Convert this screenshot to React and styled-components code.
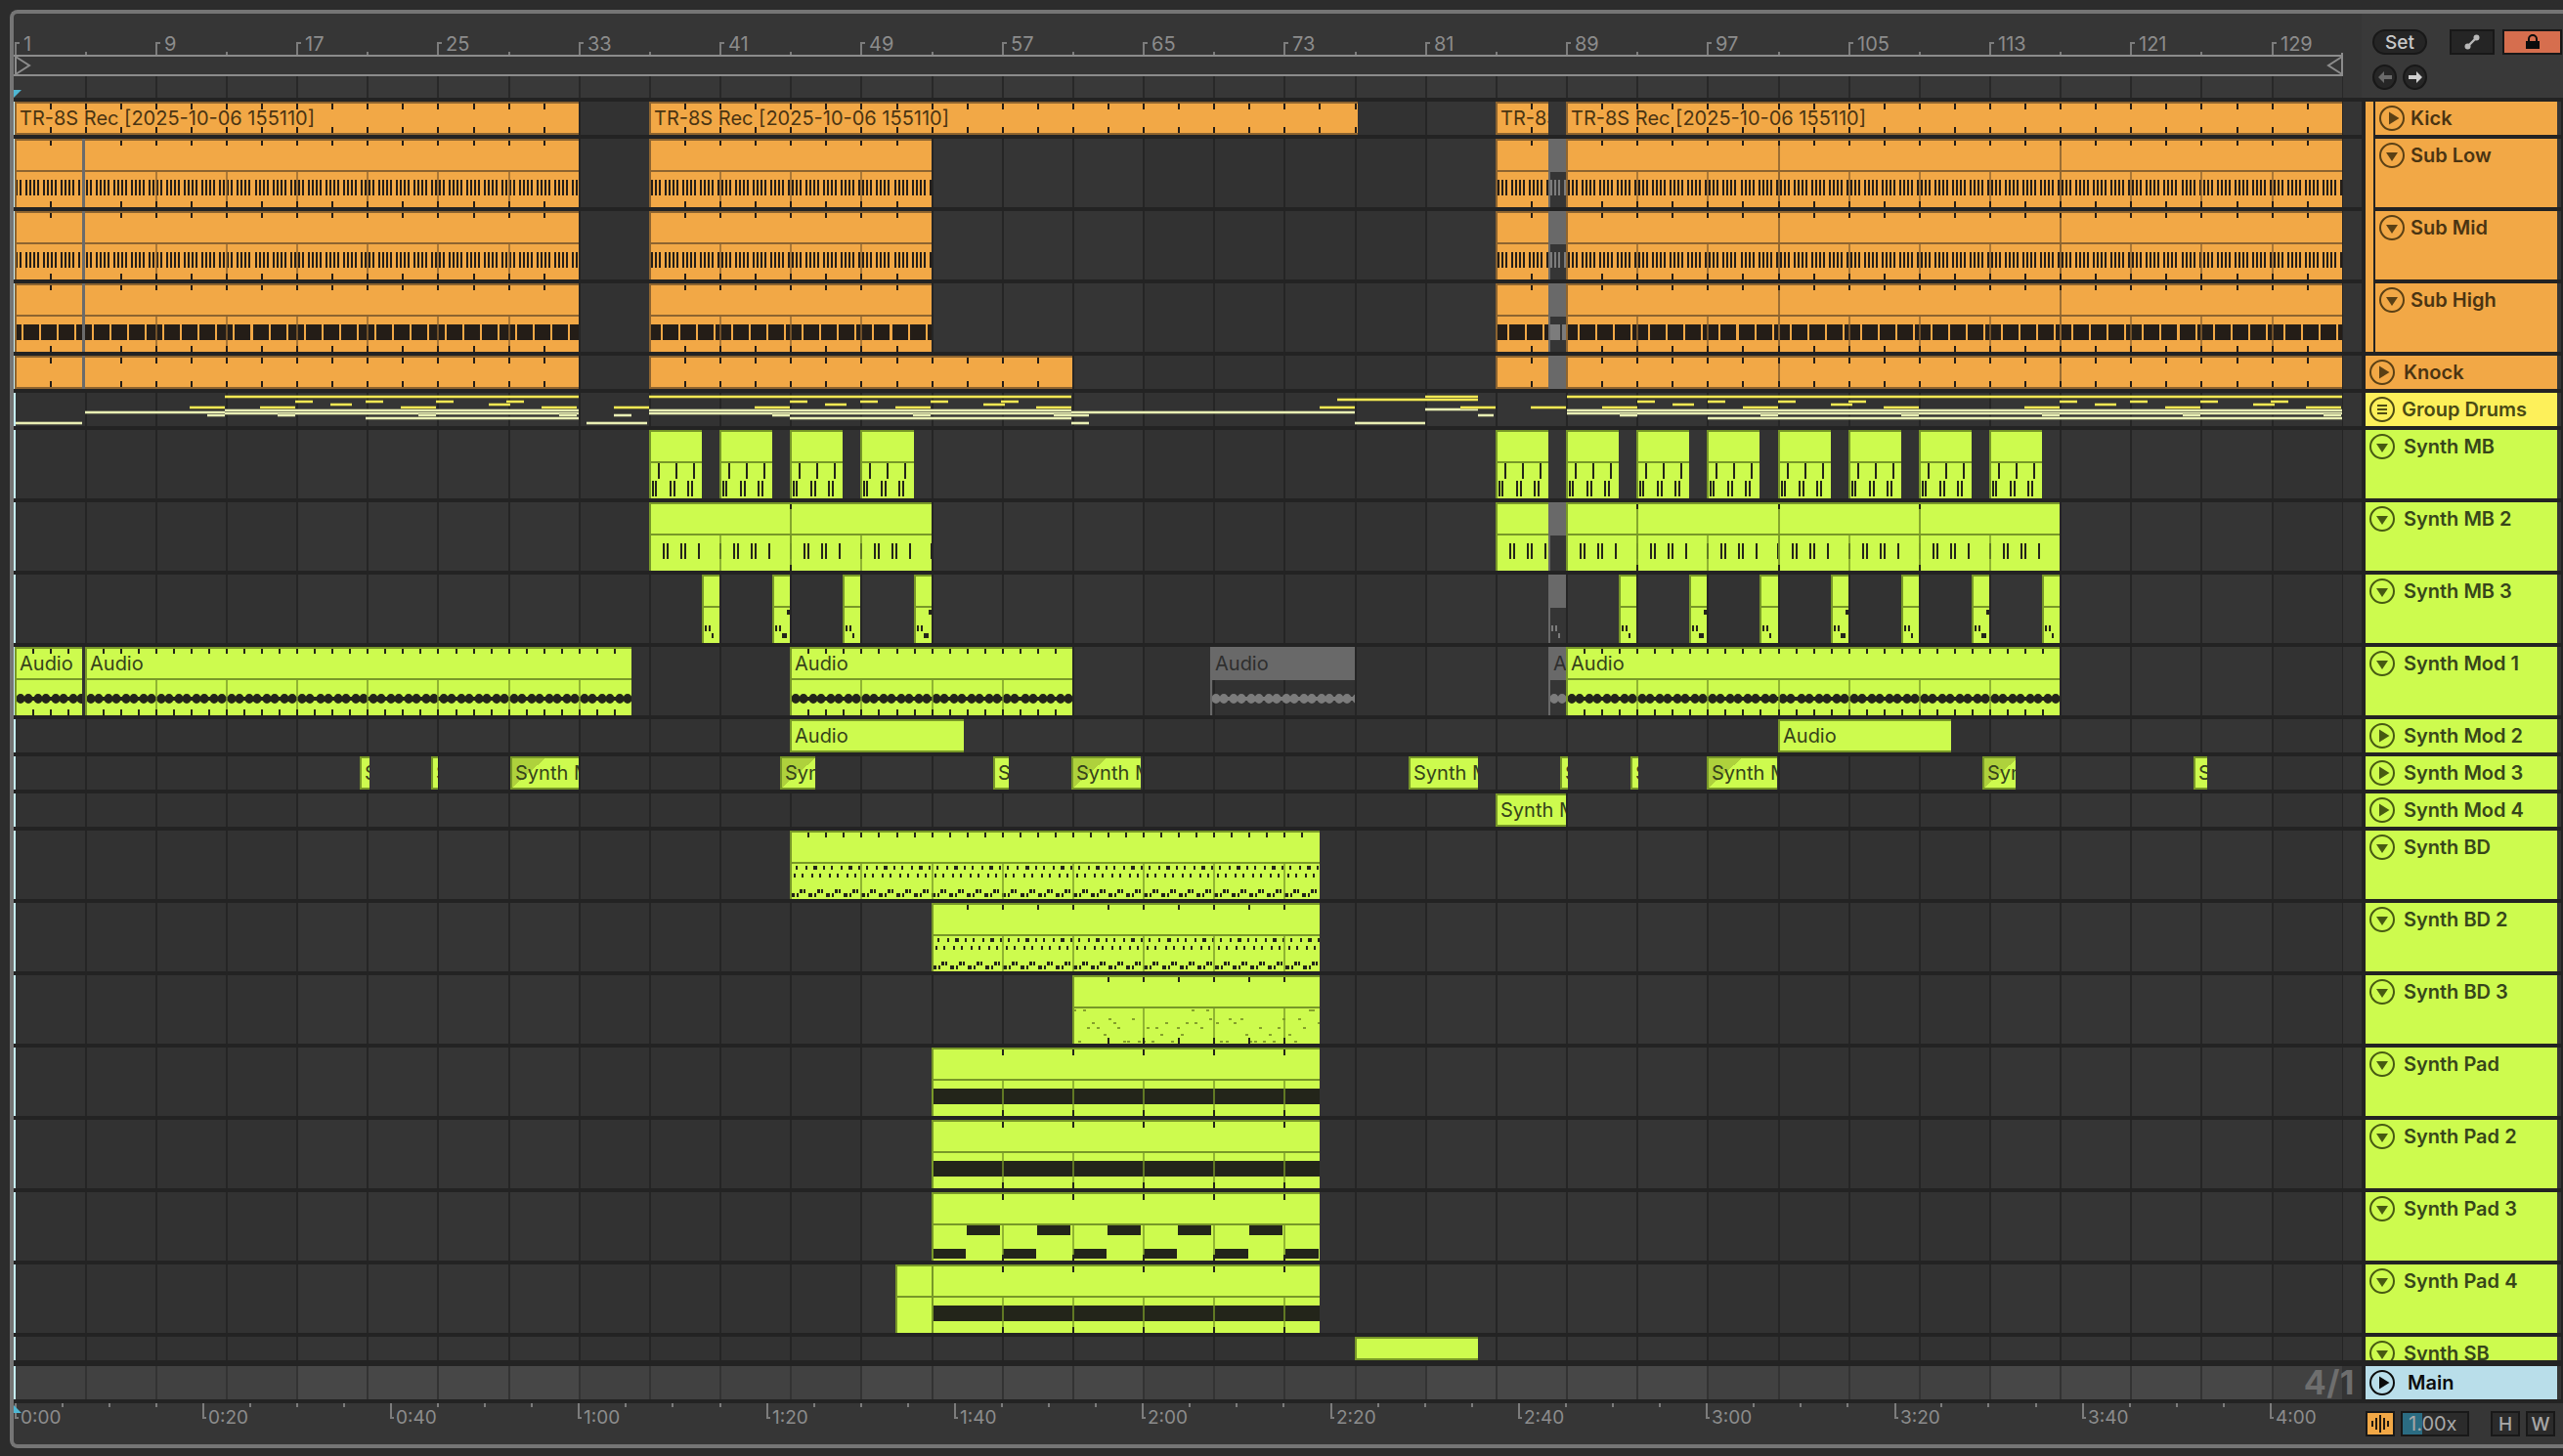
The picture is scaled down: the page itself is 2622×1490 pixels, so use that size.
import React from "react";
import styled, { createGlobalStyle } from "styled-components";

//timeline maths
const BAR = 18.04;
const barX = (n) => 15.5 + (n - 1) * BAR;
const gx = (n) => Math.round(barX(n));
const b = (n) => gx(n) - 1;
const LANE_LEFT = 14;
const LANE_WIDTH = 2383;
const rect = (x, y, w, h) => `M${x} ${y}h${w}v${h}h${-w}z`;

//colours for a clip
const ORANGE = { head: "#f2a846", body: "#f2a846", edge: "#8d6430", ink: "#241d17", text: "#4a3412" };
const LIME = { head: "#cdfb4e", body: "#cdfb4e", edge: "#789828", ink: "#23251a", text: "#35421a" };
const GRAY = { head: "#696969", body: "transparent", edge: "#696969", ink: "#7c7c7c", text: "#2e2e2e", plain: true };

const gridBackground = (base, alt, line) => {
  const stops = [];
  let pos = 0;
  for (let n = 5; n <= 133; n += 4) {
    const x = gx(n) - LANE_LEFT;
    const fill = (n - 5) % 32 < 16 ? base : alt;
    stops.push(`${fill} ${pos}px`, `${fill} ${x - 1}px`, `${line} ${x - 1}px`, `${line} ${x + 1}px`);
    pos = x + 1;
  }
  stops.push(`${base} ${pos}px`);
  return `linear-gradient(90deg, ${stops.join(",")})`;
};
const LANE_BG = gridBackground("#323232", "#353535", "#252525");
const MAIN_BG = gridBackground("#414141", "#474747", "#333333");
const STRIP_BG = gridBackground("#373737", "#393939", "#282828");

//drawing helpers, everything in page x
const ticks = (x0, x1, t, start, step, spans) => {
  if (t.plain) return [];
  let d = "";
  for (let n = start; barX(n) < x1 - 1; n += step) {
    if (barX(n) <= x0 + 2) continue;
    const x = gx(n) - 1;
    spans.forEach(([y, h]) => (d += rect(x, y, 2, h)));
  }
  return [{ d, fill: t.ink }];
};
const bodyLines = (x0, x1, t, y = 34, h = 36) => {
  if (t.plain) return [];
  let d = "";
  for (let n = 1; barX(n) < x1 - 1; n += 4) {
    if (barX(n) <= x0 + 2) continue;
    d += rect(gx(n) - 1, y, 2, h);
  }
  return [{ d, fill: t.edge, opacity: 0.72 }];
};
const loopLines = (x1, bars, t) => [
  { d: bars.filter((n) => barX(n) < x1).map((n) => rect(gx(n) - 1, 0, 2, 70)).join(""), fill: t.edge, opacity: 0.85 },
];
const repeat = (x0, x1, anchor, period, fn) => {
  let d = "";
  let k = Math.floor((x0 - anchor) / period) - 1;
  for (; anchor + k * period < x1; k++) d += fn(Math.round(anchor + k * period), k);
  return d;
};

const subLowArt = (anchor, loops = []) => (x0, x1, t) => [
  { d: repeat(x0, x1, anchor, BAR, (x) => rect(x, 42, 2, 16) + rect(x + 4, 42, 2, 16) + rect(x + 8, 42, 2, 16) + rect(x + 12, 42, 2, 16)), fill: t.ink },
  ...bodyLines(x0, x1, t),
  ...loopLines(x1, loops, t),
  ...ticks(x0, x1, t, 3, 2, [[2, 5], [64, 6]]),
];
const subHighArt = (anchor, loops = []) => (x0, x1, t) => [
  { d: repeat(x0, x1, anchor, BAR, (x) => rect(x, 42, 16, 16)), fill: t.ink },
  ...bodyLines(x0, x1, t),
  ...loopLines(x1, loops, t),
  ...ticks(x0, x1, t, 3, 2, [[2, 5], [64, 6]]),
];
const knockArt = (loops = []) => (x0, x1, t) => [
  ...loopLines(x1, loops, t),
  ...ticks(x0, x1, t, 3, 2, [[2, 6], [26, 6]]),
];
const mbArt = (x0, x1, t) => [
  { d: [9, 27, 45].map((o) => rect(x0 + o, 34, 2, 16)).join(""), fill: t.ink },
  { d: [3, 6, 21, 25, 39, 43].map((o) => rect(x0 + o, 52, 2, 16)).join(""), fill: t.ink },
];
const mb2Art = (anchor, loops) => (x0, x1, t) => [
  { d: repeat(x0, x1, anchor, BAR * 4, (x) => rect(x + 14, 42, 2, 16) + rect(x + 18, 42, 2, 16) + rect(x + 32, 42, 2, 16) + rect(x + 36, 42, 2, 16) + rect(x + 50, 42, 2, 16) + rect(x + 72, 42, 2, 16)), fill: t.ink },
  ...bodyLines(x0, x1, t),
  ...loopLines(x1, loops, t),
  ...ticks(x0, x1, t, 5, 8, [[2, 5], [64, 6]]),
];
const mb3Art = (alt) => (x0, x1, t) => [
  {
    d:
      rect(x0 + 3, 52, 2, 6) + rect(x0 + 7, 52, 2, 6) + rect(x0 + 10, 60, 2, 5) +
      (alt ? rect(x0 + 15, 36, 3, 5) + rect(x0 + 12, 60, 3, 5) : ""),
    fill: t.ink,
  },
];
const waveArt = (x0, x1, t) => [
  {
    d: repeat(x0 + 2, x1, x0 + 2, BAR, (x) =>
      `M${x + 4} 48a4.5 5 0 0 1 0 10a4.5 5 0 0 1 0 -10z` +
      `M${x + 12} 48a4.5 5 0 0 1 0 10a4.5 5 0 0 1 0 -10z` +
      rect(x + 14, 51, 5, 4)
    ),
    fill: t.ink,
  },
  ...bodyLines(x0, x1, t),
  ...ticks(x0, x1, t, 2, 1, [[2, 5], [64, 6]]),
];
const dotsArt = (start, step) => (x0, x1, t) => [
  {
    d: repeat(x0, x1, x0, BAR, (x, k) =>
      rect(x + 6, 36, k % 2 ? 4 : 2, 4) + rect(x + 16, 36, 2, 4) +
      rect(x + 4, 44, 2, 4) + rect(x + 12, 44, 2, 4) +
      rect(x + 10, 60, 3, 4) + rect(x + 14, 60, 2, 4) +
      rect(x + 1, 64, 4, 4) + rect(x + 7, 64, 2, 4)
    ),
    fill: t.ink,
  },
  ...bodyLines(x0, x1, t),
  ...ticks(x0, x1, t, start, step, [[2, 5]]),
];
//scattered quiet notes, a fixed scramble so the picture never changes
const scramble = (k) => {
  const s = Math.sin(k * 12.9898) * 43758.5453;
  return s - Math.floor(s);
};
const FAINT_ROWS = [35, 44, 48, 53, 60, 67, 67];
const faintArt = (x0, x1, t) => [
  {
    d: repeat(x0, x1, x0, 5, (x, k) => {
      if (k < 0) return "";
      const y = FAINT_ROWS[Math.floor(scramble(k) * FAINT_ROWS.length)];
      return rect(x + Math.floor(scramble(k + 500) * 3), y, 3, 2);
    }),
    fill: "#84a02c",
  },
  ...bodyLines(x0, x1, t),
  ...ticks(x0, x1, t, 63, 2, [[2, 5], [64, 6]]),
];
const padArt = (x0, x1, t) => [
  { d: rect(x0, 42, x1 - x0, 16), fill: t.ink },
  ...bodyLines(x0, x1, t),
  ...ticks(x0, x1, t, 1, 4, [[2, 6], [64, 6]]),
];
const padStepArt = (x0, x1, t) => [
  { d: repeat(x0, x1, b(53), BAR * 4, (x) => rect(x + 36, 34, 34, 10) + rect(x + 1, 58, 34, 10)), fill: t.ink },
  ...bodyLines(x0, x1, t),
  ...ticks(x0, x1, t, 1, 4, [[2, 6], [64, 6]]),
];

const TR = "TR-8S Rec [2025-10-06 155110]";
const subClips = (art) => [
  { x0: b(1), x1: 84, t: ORANGE, art: art(26) },
  { x0: 84, x1: 87, t: GRAY, solid: true },
  { x0: 87, x1: b(33), t: ORANGE, art: art(26), bare: true },
  { x0: b(37), x1: b(53), t: ORANGE, art: art(680) },
  { x0: b(85), x1: b(88), t: ORANGE, art: art(1546) },
  { x0: b(88), x1: b(89), t: GRAY, art: art(1546) },
  { x0: b(89), x1: b(133), t: ORANGE, art: art(1546, [101, 117]) },
];
const subLow = (anchor, loops) => subLowArt(anchor, loops);
const subHigh = (anchor, loops) => subHighArt(anchor - 2, loops);
const mbClips = (bars, art) => bars.map((n) => ({ x0: b(n), x1: b(n + 3), t: LIME, art }));
const mb3Clips = (bars) => bars.map((n, i) => ({ x0: b(n), x1: b(n + 1), t: LIME, art: mb3Art(i % 2 === 1) }));
const MOD3 = [
  [368, 378], [441, 448], [522, 592, true], [798, 834, true], [1016, 1032], [1096, 1167, true],
  [1441, 1512], [1596, 1604], [1668, 1676], [1746, 1818, true], [2028, 2062, true], [2244, 2258],
];
const CLIP_END = gx(75);

const TRACKS = [
  { name: "Kick", icon: "play", color: "orange", h: 34, nested: true, clips: [
    { x0: b(1), x1: b(33), t: ORANGE, title: TR, art: knockArt() },
    { x0: b(37), x1: 1389, t: ORANGE, title: TR, art: knockArt() },
    { x0: b(85), x1: b(88), t: ORANGE, title: TR, art: knockArt() },
    { x0: b(89), x1: b(133), t: ORANGE, title: TR, art: knockArt() },
  ] },
  { name: "Sub Low", icon: "down", color: "orange", h: 70, nested: true, clips: subClips(subLow) },
  { name: "Sub Mid", icon: "down", color: "orange", h: 70, nested: true, clips: subClips(subLow) },
  { name: "Sub High", icon: "down", color: "orange", h: 70, nested: true, clips: subClips(subHigh) },
  { name: "Knock", icon: "play", color: "orange", h: 34, clips: [
    { x0: b(1), x1: 84, t: ORANGE, art: knockArt() },
    { x0: 84, x1: 87, t: GRAY, solid: true },
    { x0: 87, x1: b(33), t: ORANGE, art: knockArt(), bare: true },
    { x0: b(37), x1: b(61), t: ORANGE, art: knockArt() },
    { x0: b(85), x1: b(88), t: ORANGE, art: knockArt() },
    { x0: b(88), x1: b(89), t: GRAY },
    { x0: b(89), x1: b(133), t: ORANGE, art: knockArt([101, 117]) },
  ] },
  { name: "Group Drums", icon: "group", color: "yellow", h: 34, overview: true, clips: [] },
  { name: "Synth MB", icon: "down", color: "lime", h: 70, clips: mbClips([37, 41, 45, 49, 85, 89, 93, 97, 101, 105, 109, 113], mbArt) },
  { name: "Synth MB 2", icon: "down", color: "lime", h: 70, clips: [
    { x0: b(37), x1: b(53), t: LIME, art: mb2Art(b(37), [45]) },
    { x0: b(85), x1: b(88), t: LIME, art: mb2Art(b(85), []) },
    { x0: b(88), x1: b(89), t: GRAY },
    { x0: b(89), x1: b(117), t: LIME, art: mb2Art(b(85), [93, 101, 109]) },
  ] },
  { name: "Synth MB 3", icon: "down", color: "lime", h: 70, clips: [
    ...mb3Clips([40, 44, 48, 52, 92, 96, 100, 104, 108, 112, 116]),
    { x0: b(88), x1: b(89), t: GRAY, art: mb3Art(false) },
  ] },
  { name: "Synth Mod 1", icon: "down", color: "lime", h: 70, clips: [
    { x0: b(1), x1: 84, t: LIME, title: "Audio", art: waveArt },
    { x0: 87, x1: 646, t: LIME, title: "Audio", art: waveArt },
    { x0: b(45), x1: b(61), t: LIME, title: "Audio", art: waveArt },
    { x0: 1238, x1: b(77), t: GRAY, title: "Audio", art: waveArt },
    { x0: b(88), x1: b(89), t: GRAY, title: "Audio", art: waveArt },
    { x0: b(89), x1: b(117), t: LIME, title: "Audio", art: waveArt },
  ] },
  { name: "Synth Mod 2", icon: "play", color: "lime", h: 34, clips: [
    { x0: b(45), x1: 986, t: LIME, title: "Audio" },
    { x0: 1819, x1: 1996, t: LIME, title: "Audio" },
  ] },
  { name: "Synth Mod 3", icon: "play", color: "lime", h: 34, clips: MOD3.map(([x0, x1, fade]) => ({ x0, x1, t: LIME, title: "Synth Mod 3", fade })) },
  { name: "Synth Mod 4", icon: "play", color: "lime", h: 34, clips: [{ x0: b(85), x1: b(89), t: LIME, title: "Synth Mod 4" }] },
  { name: "Synth BD", icon: "down", color: "lime", h: 70, clips: [{ x0: b(45), x1: CLIP_END, t: LIME, art: dotsArt(46, 1) }] },
  { name: "Synth BD 2", icon: "down", color: "lime", h: 70, clips: [{ x0: b(53), x1: CLIP_END, t: LIME, art: dotsArt(55, 2) }] },
  { name: "Synth BD 3", icon: "down", color: "lime", h: 70, clips: [{ x0: b(61), x1: CLIP_END, t: LIME, art: faintArt }] },
  { name: "Synth Pad", icon: "down", color: "lime", h: 70, clips: [{ x0: b(53), x1: CLIP_END, t: LIME, art: padArt }] },
  { name: "Synth Pad 2", icon: "down", color: "lime", h: 70, clips: [{ x0: b(53), x1: CLIP_END, t: LIME, art: padArt }] },
  { name: "Synth Pad 3", icon: "down", color: "lime", h: 70, clips: [{ x0: b(53), x1: CLIP_END, t: LIME, art: padStepArt }] },
  { name: "Synth Pad 4", icon: "down", color: "lime", h: 70, clips: [
    { x0: 916, x1: b(53), t: LIME },
    { x0: b(53), x1: CLIP_END, t: LIME, art: padArt },
  ] },
  { name: "Synth SB", icon: "down", color: "lime", h: 24, short: true, clips: [{ x0: 1386, x1: 1512, t: LIME, stub: true }] },
];

//group track overview lines
const PHRASE = [
  ["y", 410, 144, 162], ["y", 410, 216, 234], ["y", 410, 288, 306], ["y", 410, 360, 378],
  ["y", 413, 180, 202], ["y", 413, 342, 364],
  ["y", 416, 108, 144], ["y", 416, 252, 288], ["y", 416, 396, 432],
  ["p", 424, 126, 144], ["p", 424, 270, 288], ["p", 424, 414, 432],
];
const phrase = (origin, from, to) => {
  const out = [["y", 405, from, to], ["p", 419, from, to], ["p", 422, from, to], ["p", 427, Math.min(from + 144, to), to]];
  for (let k = 0; origin + k * 432 < to; k++) {
    PHRASE.forEach(([c, y, a, z]) => {
      const s = Math.max(origin + k * 432 + a, from);
      const e = Math.min(origin + k * 432 + z, to);
      if (e > s) out.push([c, y, s, e]);
    });
  }
  return out;
};
const OVERVIEW = [
  ["p", 432, 16, 84], ["p", 421, 87, 230], ["y", 416, 194, 230], ["p", 424, 212, 230],
  ...phrase(158, 230, 592),
  ["p", 432, 600, 662], ["y", 416, 628, 664], ["p", 424, 628, 646],
  ...phrase(664, 664, 1096),
  ["p", 421, 1096, 1386], ["p", 424, 1096, 1114], ["p", 432, 1096, 1114],
  ["y", 416, 1350, 1386], ["y", 408, 1368, 1512], ["y", 405, 1458, 1512],
  ["p", 432, 1386, 1458], ["p", 418, 1458, 1512], ["y", 416, 1494, 1530], ["p", 424, 1512, 1528],
  ["y", 416, 1566, 1602],
  ...phrase(1531, 1603, 2396),
];

const GlobalStyle = createGlobalStyle`
  html, body {
    margin: 0;
    padding: 0;
    background: #2c2c2c;
  }
  body {
    width: 2622px;
    height: 1490px;
    overflow: hidden;
    font-family: Inter, "Liberation Sans", sans-serif;
  }
`;

const Window = styled.div`
  box-sizing: border-box;
  position: relative;
  width: 2612px;
  height: 1472px;
  margin: 10px 0 0 10px;
  border: 4px solid #757575;
  border-right: none;
  border-radius: 8px 0 0 8px;
  background: #363636;
  display: flex;
  flex-direction: column;
`;

const TopArea = styled.div`
  display: flex;
  height: 86px;
`;

const RulerColumn = styled.div`
  width: ${LANE_WIDTH}px;
  display: flex;
  flex-direction: column;
`;

const BarScale = styled.div`
  position: relative;
  height: 42px;
`;

const RulerArt = styled.svg`
  position: absolute;
  left: 0;
  top: 0;
  overflow: visible;
`;

const ScaleLabel = styled.span.attrs((p) => ({ style: { left: p.$x } }))`
  position: absolute;
  top: ${(p) => p.$top}px;
  font-size: ${(p) => p.$size}px;
  line-height: 22px;
  color: #8c8c8c;
`;

const LoopBar = styled.div`
  height: 22px;
`;

const GridStrip = styled.div`
  position: relative;
  height: 22px;
  background: ${STRIP_BG};
`;

const Marker = styled.svg`
  position: absolute;
  left: 0;
  bottom: 0;
`;

const TopControls = styled.div`
  flex: 1;
  margin-left: 19px;
  padding: 16px 0 0 11px;
  background: #393939;
  display: grid;
  grid-template-columns: 56px 46px 46px;
  grid-template-rows: 26px 26px;
  column-gap: 23px;
  row-gap: 10px;
  grid-template-areas: "set expand lock" "nav . .";
`;

const SetButton = styled.div`
  box-sizing: border-box;
  grid-area: set;
  background: #252525;
  border: 2px solid #181818;
  border-radius: 13px;
  color: #c8c8c8;
  font-size: 19px;
  font-weight: 500;
  display: flex;
  align-items: center;
  justify-content: center;
`;

const SquareButton = styled.div`
  box-sizing: border-box;
  grid-area: ${(p) => p.$area};
  margin-left: ${(p) => p.$shift || 0}px;
  background: ${(p) => p.$bg};
  border: 2px solid #181818;
  display: flex;
  align-items: center;
  justify-content: center;
`;

const NavButtons = styled.div`
  grid-area: nav;
  display: flex;
  gap: 6px;
`;

const RoundButton = styled.div`
  box-sizing: border-box;
  width: 26px;
  height: 26px;
  border-radius: 50%;
  background: #262626;
  border: 2px solid #181818;
  display: flex;
  align-items: center;
  justify-content: center;
`;

const Rows = styled.div`
  position: relative;
  display: flex;
  flex-direction: column;
  gap: 4px;
  padding: 4px 0;
  background: #232323;
`;

const TrackRow = styled.div`
  display: flex;
  height: ${(p) => p.$h}px;
  overflow: hidden;
`;

const Lane = styled.div`
  position: relative;
  flex: none;
  width: ${LANE_WIDTH}px;
  height: 100%;
  overflow: hidden;
  background: ${(p) => p.$bg};
  &::before {
    content: "";
    position: absolute;
    left: 0;
    top: 0;
    bottom: 0;
    width: 2px;
    background: #c6eef6;
  }
`;

const Gutter = styled.div`
  position: relative;
  flex: none;
  width: 19px;
  margin-right: 4px;
  background: #343434;
`;

const Tail = styled.div`
  flex: none;
  width: 4px;
  margin-right: 2px;
  background: #363636;
`;

const Header = styled.div`
  flex: none;
  box-sizing: border-box;
  width: ${(p) => (p.$nested ? 186 : 196)}px;
  margin-left: ${(p) => (p.$nested ? 10 : 0)}px;
  background: ${(p) => p.$bg};
  color: ${(p) => p.$ink};
`;

const HeaderLine = styled.div`
  height: 34px;
  display: flex;
  align-items: center;
  padding-left: 4px;
  gap: ${(p) => p.$gap}px;
  font-size: 20px;
  font-weight: 600;
  white-space: nowrap;
`;

const GroupStrip = styled.div`
  position: absolute;
  left: 2406px;
  top: 4px;
  width: 8px;
  height: 256px;
  border-right: 2px solid #232323;
  background: #f2a846;
`;

const ClipBox = styled.div.attrs((p) => ({ style: { left: p.$x, width: p.$w } }))`
  position: absolute;
  top: 0;
  bottom: 0;
  box-sizing: border-box;
  overflow: hidden;
  border-left: ${(p) => (p.$bare ? "0" : "2px")} solid ${(p) => p.$t.edge};
  background: ${(p) => p.$t.body};
`;

const ClipHead = styled.div`
  box-sizing: border-box;
  height: ${(p) => (p.$tall ? "34px" : "100%")};
  border-top: 2px solid ${(p) => p.$t.edge};
  border-bottom: 2px solid ${(p) => p.$t.edge};
  background: ${(p) =>
    p.$fade
      ? `linear-gradient(to bottom right, #aed13c 0 50%, transparent 50%) 0 0 / 34px 100% no-repeat, ${p.$t.head}`
      : p.$t.head};
  color: ${(p) => p.$t.text};
  font-size: 20px;
  line-height: 30px;
  padding-left: 3px;
  white-space: nowrap;
  overflow: hidden;
`;

const SolidClip = styled(ClipBox)`
  border: none;
  background: #6b6b6b;
`;

const ClipArt = styled.svg`
  position: absolute;
  left: 0;
  top: 0;
  pointer-events: none;
`;

const OverviewArt = styled.svg`
  position: absolute;
  left: 0;
  top: 0;
`;

const MainRow = styled.div`
  display: flex;
  height: 34px;
  margin-top: 2px;
`;

const ZoomLabel = styled.div`
  position: absolute;
  right: 7px;
  top: 0;
  height: 34px;
  line-height: 34px;
  font-size: 34px;
  font-weight: 700;
  letter-spacing: 0.5px;
  color: #6e6e6e;
`;

const BottomBar = styled.div`
  flex: 1;
  display: flex;
`;

const TimeScale = styled.div`
  position: relative;
  width: ${LANE_WIDTH}px;
`;

const BottomControls = styled.div`
  margin-left: 23px;
  padding-top: 8px;
  display: flex;
  align-items: flex-start;
`;

const WaveButton = styled.div`
  box-sizing: border-box;
  width: 30px;
  height: 26px;
  background: #f2a846;
  border: 2px solid #181818;
`;

const SpeedBox = styled.div`
  box-sizing: border-box;
  position: relative;
  width: 70px;
  height: 26px;
  margin-left: 6px;
  border: 2px solid #181818;
  background: #2b2b2b;
  color: #a8a8a8;
  font-size: 20px;
  line-height: 22px;
  padding-left: 6px;
  span {
    position: relative;
  }
`;

const SpeedFill = styled.div`
  position: absolute;
  left: 0;
  top: 0;
  bottom: 0;
  width: 20px;
  background: #2b6c82;
`;

const LetterButton = styled.div`
  box-sizing: border-box;
  width: 30px;
  height: 26px;
  margin-left: ${(p) => p.$gap}px;
  border: 2px solid #181818;
  background: #2b2b2b;
  color: #a8a8a8;
  font-size: 19px;
  font-weight: 500;
  display: flex;
  align-items: center;
  justify-content: center;
`;

//track on/off toggle
const Toggle = ({ kind, color }) => (
  <svg width="26" height="26" viewBox="0 0 26 26" style={{ flex: "none" }}>
    <circle cx="13" cy="13" r="12" fill="none" stroke={color} strokeWidth="2" />
    {kind === "play" && <path d="M10 6.5 L20.5 13 L10 19.5 Z" fill={color} />}
    {kind === "down" && <path d="M7 10 H19 L13 19 Z" fill={color} />}
    {kind === "group" && <path d="M8 8 h10 v2 h-10z M8 12 h10 v2 h-10z M8 16 h10 v2 h-10z" fill={color} />}
  </svg>
);

const HEADER_COLORS = {
  orange: { bg: "#f2a846", ink: "#4a3412", icon: "#5a4015" },
  yellow: { bg: "#fdf05a", ink: "#4a4a14", icon: "#4f4c14" },
  lime: { bg: "#cdfb4e", ink: "#37461a", icon: "#475a12" },
  main: { bg: "#b9deea", ink: "#0c0c0c", icon: "#0c0c0c" },
};

const TrackHeader = ({ name, icon, color, nested }) => {
  const c = HEADER_COLORS[color];
  return (
    <Header $bg={c.bg} $ink={c.ink} $nested={nested}>
      <HeaderLine $gap={color === "main" ? 13 : nested ? 6 : color === "yellow" ? 7 : 9}>
        <Toggle kind={icon} color={c.icon} />
        {name}
      </HeaderLine>
    </Header>
  );
};

const Clip = ({ clip, height }) => {
  const { x0, x1, t, title, art, fade, bare, solid, stub } = clip;
  const width = x1 - x0;
  if (solid) return <SolidClip $x={x0 - LANE_LEFT} $w={width} $t={t} />;
  const tall = height > 34 && !stub;
  const layers = art ? art(x0, x1, t) : [];
  //only as many letters as the clip has room for, the rest never shows
  const shown = title ? title.slice(0, Math.max(1, Math.ceil((width - 6) / 10))) : null;
  return (
    <ClipBox $x={x0 - LANE_LEFT} $w={width} $t={t} $bare={bare}>
      <ClipHead $t={t} $tall={tall} $fade={fade}>{shown}</ClipHead>
      {layers.length > 0 && (
        <ClipArt width={width} height={height}>
          <g transform={`translate(${-(x0 + (bare ? 0 : 2))} 0)`}>
            {layers.map((l, i) => (
              <path key={i} d={l.d} fill={l.fill} fillOpacity={l.opacity || 1} />
            ))}
          </g>
        </ClipArt>
      )}
    </ClipBox>
  );
};

const Overview = () => (
  <OverviewArt width={LANE_WIDTH} height="34">
    {OVERVIEW.map(([c, y, from, to], i) => (
      <g key={i} transform={`translate(${-LANE_LEFT} -402)`}>
        <rect x={from} y={y - 1} width={to - from} height="4" fill={c === "y" ? "#8f8a3a" : "#8e9070"} fillOpacity="0.6" />
        <rect x={from} y={y} width={to - from} height="2" fill={c === "y" ? "#f2e854" : "#e8eeb4"} />
      </g>
    ))}
  </OverviewArt>
);

const RULER = Array.from({ length: 17 }, (_, i) => 1 + i * 8);
const TIMES = Array.from({ length: 13 }, (_, i) => {
  const s = i * 20;
  return `${Math.floor(s / 60)}:${String(s % 60).padStart(2, "0")}`;
});
const timeX = (i) => 15.5 + i * 192.3;

const App = () => (
  <>
    <GlobalStyle />
    <Window>
      <TopArea>
        <RulerColumn>
          <BarScale>
            <RulerArt width={LANE_WIDTH} height="42">
              {RULER.map((n) => (
                <path key={n} d={`M${gx(n) - LANE_LEFT} 42V30h4`} fill="none" stroke="#7c7c7c" strokeWidth="2" />
              ))}
              {RULER.slice(0, 16).map((n) => (
                <rect key={n} x={gx(n + 4) - LANE_LEFT - 1} y="39" width="2" height="3" fill="#7c7c7c" />
              ))}
            </RulerArt>
            {RULER.map((n) => (
              <ScaleLabel key={n} $x={gx(n) - LANE_LEFT + 8} $top={20} $size={20}>{n}</ScaleLabel>
            ))}
          </BarScale>
          <LoopBar>
            <svg width={LANE_WIDTH} height="22" style={{ display: "block", overflow: "visible" }}>
              <path d="M0 1H2383M0 21H2383" stroke="#8c8c8c" strokeWidth="2" fill="none" />
              <path d="M2 2L16 11L2 20Z" stroke="#8c8c8c" strokeWidth="2" fill="none" />
              <path d="M2382 -2V22M2382 2L2368 11L2382 20" stroke="#8c8c8c" strokeWidth="2" fill="none" />
            </svg>
          </LoopBar>
          <GridStrip>
            <Marker width="9" height="8">
              <path d="M0 0H8L0 8Z" fill="#4fb7d3" />
            </Marker>
          </GridStrip>
        </RulerColumn>
        <TopControls>
          <SetButton>Set</SetButton>
          <SquareButton $area="expand" $bg="#252525">
            <svg width="18" height="18" viewBox="0 0 18 18">
              <path d="M4 14L14 4" stroke="#b8b8b8" strokeWidth="2.4" />
              <circle cx="4.5" cy="13.5" r="3" fill="#b8b8b8" />
              <circle cx="13.5" cy="4.5" r="3" fill="#b8b8b8" />
            </svg>
          </SquareButton>
          <SquareButton $area="lock" $shift={-15} $bg="#d66e4e">
            <svg width="16" height="16" viewBox="0 0 16 16">
              <path d="M4 7V5a4 4 0 0 1 8 0v2" fill="none" stroke="#0c0c0c" strokeWidth="2" />
              <rect x="1" y="7" width="14" height="8" fill="#0c0c0c" />
            </svg>
          </SquareButton>
          <NavButtons>
            <RoundButton>
              <svg width="16" height="14" viewBox="0 0 16 14">
                <path d="M1 7L7 1V5H15V9H7V13Z" fill="#6a6a6a" />
              </svg>
            </RoundButton>
            <RoundButton>
              <svg width="16" height="14" viewBox="0 0 16 14">
                <path d="M15 7L9 1V5H1V9H9V13Z" fill="#cfcfcf" />
              </svg>
            </RoundButton>
          </NavButtons>
        </TopControls>
      </TopArea>
      <Rows>
        {TRACKS.map((track) => (
          <TrackRow key={track.name} $h={track.h}>
            <Lane $bg={LANE_BG}>
              {track.overview && <Overview />}
              {track.clips.map((clip, i) => (
                <Clip key={i} clip={clip} height={track.h} />
              ))}
            </Lane>
            <Gutter />
            <TrackHeader name={track.name} icon={track.icon} color={track.color} nested={track.nested} />
            <Tail />
          </TrackRow>
        ))}
        <GroupStrip />
        <MainRow>
          <Lane $bg={MAIN_BG} />
          <Gutter>
            <ZoomLabel>4/1</ZoomLabel>
          </Gutter>
          <TrackHeader name="Main" icon="play" color="main" />
          <Tail />
        </MainRow>
      </Rows>
      <BottomBar>
        <TimeScale>
          <RulerArt width={LANE_WIDTH} height="40">
            {TIMES.map((label, i) => (
              <path key={label} d={`M${Math.round(timeX(i)) - LANE_LEFT} 0V15h3`} fill="none" stroke="#7c7c7c" strokeWidth="2" />
            ))}
            {Array.from({ length: 49 }, (_, i) => i)
              .filter((i) => i % 4 !== 0)
              .map((i) => (
                <rect key={i} x={Math.round(15.5 + i * 48.07) - LANE_LEFT - 1} y="0" width="2" height="4" fill="#7c7c7c" />
              ))}
            <path d="M0 2V10H8Z" fill="#4fb7d3" />
          </RulerArt>
          {TIMES.map((label, i) => (
            <ScaleLabel key={label} $x={Math.round(timeX(i)) - LANE_LEFT + 5} $top={4} $size={19}>{label}</ScaleLabel>
          ))}
        </TimeScale>
        <BottomControls>
          <WaveButton>
            <svg width="26" height="22" viewBox="0 0 26 22" style={{ display: "block" }}>
              <path d="M5 8v6M9 5v12M13 2v18M17 5v12M21 8v6" stroke="#231a10" strokeWidth="2" />
            </svg>
          </WaveButton>
          <SpeedBox>
            <SpeedFill />
            <span>1.00x</span>
          </SpeedBox>
          <LetterButton $gap={22}>H</LetterButton>
          <LetterButton $gap={6}>W</LetterButton>
        </BottomControls>
      </BottomBar>
    </Window>
  </>
);

export default App;
